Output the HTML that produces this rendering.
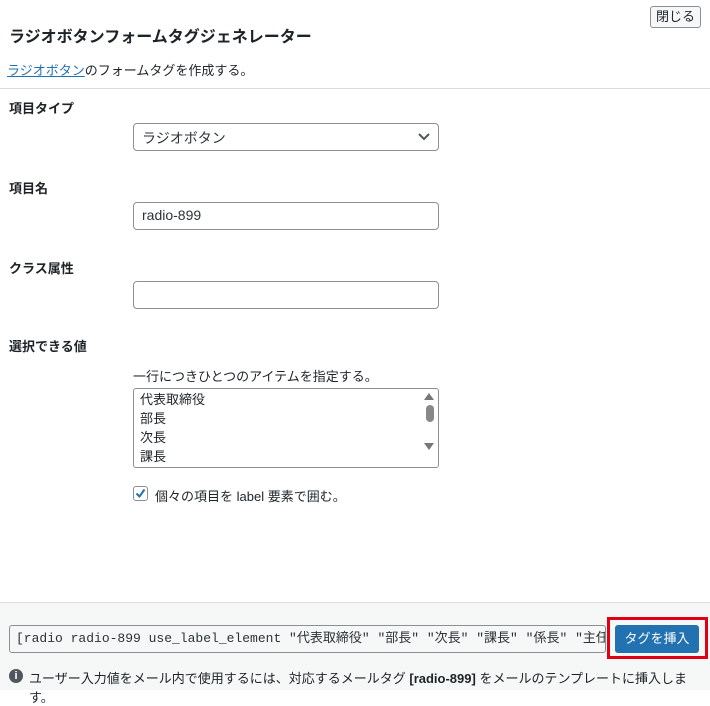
<html><head><style>
body{margin:0;width:710px;height:689px;position:relative;background:#fff;font-family:"Liberation Sans","Noto Sans CJK JP",sans-serif;color:#1d2327;overflow:hidden}
.a{position:absolute}
.lbl{position:absolute;left:9px;font-size:13px;font-weight:bold}
.inp{position:absolute;left:133px;width:306px;height:28px;border:1px solid #8c8f94;border-radius:4px;box-sizing:border-box;font-size:14px;padding:4px 8px;color:#2c3338}
</style></head><body>
<div class="a" style="left:650px;top:6px;width:51px;height:22px;border:1px solid #8c8f94;border-radius:3px;background:#f6f7f7;box-sizing:border-box;font-size:13px;text-align:center;line-height:20px">閉じる</div>
<div class="a" style="left:9px;top:23px;font-size:16px;font-weight:bold">ラジオボタンフォームタグジェネレーター</div>
<div class="a" style="left:7px;top:60px;font-size:13px"><span style="color:#2271b1;text-decoration:underline">ラジオボタン</span>のフォームタグを作成する。</div>
<div class="a" style="left:0;top:88px;width:710px;height:1px;background:#dcdcde"></div>
<div class="lbl" style="top:98px">項目タイプ</div>
<div class="inp" style="top:123px">ラジオボタン<svg class="a" style="right:8px;top:9px" width="12" height="8" viewBox="0 0 12 8"><path d="M1 1l5 5 5-5" stroke="#50575e" stroke-width="2" fill="none"/></svg></div>
<div class="lbl" style="top:178px">項目名</div>
<div class="inp" style="top:202px">radio-899</div>
<div class="lbl" style="top:258px">クラス属性</div>
<div class="inp" style="top:281px"></div>
<div class="lbl" style="top:336px">選択できる値</div>
<div class="a" style="left:133px;top:366px;font-size:13px">一行につきひとつのアイテムを指定する。</div>
<div class="a" style="left:133px;top:388px;width:306px;height:80px;border:1px solid #8c8f94;border-radius:3px;box-sizing:border-box;font-size:13px;line-height:19px;padding:1px 6px;overflow:hidden">代表取締役<br>部長<br>次長<br>課長
<div class="a" style="right:4px;top:4px;width:0;height:0;border:5px solid transparent;border-bottom:7px solid #777;border-top:0"></div>
<div class="a" style="right:4px;top:16px;width:8px;height:17px;border-radius:4px;background:#888"></div>
<div class="a" style="right:4px;top:54px;width:0;height:0;border:5px solid transparent;border-top:7px solid #777;border-bottom:0"></div></div>
<div class="a" style="left:133px;top:486px;width:15px;height:15px;border:1px solid #8c8f94;border-radius:3px;box-sizing:border-box"><svg width="13" height="13" viewBox="0 0 13 13"><path d="M2.5 6.5l3 3 5-7" stroke="#2271b1" stroke-width="2" fill="none"/></svg></div>
<div class="a" style="left:155px;top:486px;font-size:13px">個々の項目を label 要素で囲む。</div>
<div class="a" style="left:0;top:602px;width:710px;height:87px;background:#f6f7f7;border-top:1px solid #dcdcde"></div>
<div class="a" style="left:9px;top:625px;width:597px;height:28px;border:1px solid #8c8f94;border-radius:3px;box-sizing:border-box;background:#f6f7f7;font-family:'Liberation Mono','Noto Sans CJK JP',monospace;font-size:13px;line-height:26px;padding-left:6px;white-space:nowrap;overflow:hidden;color:#2c3338">[radio radio-899 use_label_element "代表取締役" "部長" "次長" "課長" "係長" "主任"</div>
<div class="a" style="left:607px;top:617px;width:101px;height:42px;border:3px solid #e00012;box-sizing:border-box"></div>
<div class="a" style="left:615px;top:625px;width:84px;height:28px;background:#2271b1;border-radius:3px;color:#fff;font-size:13px;text-align:center;line-height:28px">タグを挿入</div>
<div class="a" style="left:9px;top:669px;width:14px;height:14px;border-radius:50%;background:#50575e;color:#fff;font-size:11px;font-weight:bold;text-align:center;line-height:14px">i</div>
<div class="a" style="left:29px;top:668px;font-size:13px">ユーザー入力値をメール内で使用するには、対応するメールタグ <b>[radio-899]</b> をメールのテンプレートに挿入します。</div>
</body></html>
